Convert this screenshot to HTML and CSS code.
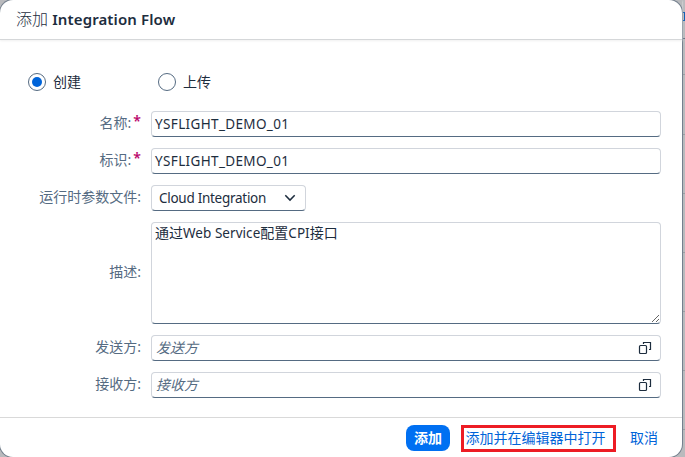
FILE: index.html
```html
<!DOCTYPE html>
<html lang="zh-CN">
<head>
<meta charset="utf-8">
<title>添加 Integration Flow</title>
<link rel="stylesheet" href="styles.css">
</head>
<body>
<div class="backdrop"><i class="mark"></i><i class="rule r1"></i><i class="rule r2"></i><i class="rule r3"></i><i class="rule r4"></i><i class="rule r5"></i><i class="rule r6"></i><i class="rule r7"></i><i class="rule r8"></i></div>
<main class="dialog">
  <header class="header"><h1>添加 <b>Integration Flow</b></h1></header>
  <section class="content">
    <div class="radios">
      <label class="radio"><span class="dot checked"></span>创建</label>
      <label class="radio"><span class="dot"></span>上传</label>
    </div>
    <div class="form">
      <div class="label">名称:<em>*</em></div><div class="field"><span class="code">YSFLIGHT_DEMO_01</span></div>
      <div class="label">标识:<em>*</em></div><div class="field"><span class="code">YSFLIGHT_DEMO_01</span></div>
      <div class="label">运行时参数文件:</div>
      <div class="field select"><span class="choice">Cloud Integration</span><svg width="12" height="8" viewBox="0 0 12 8"><path d="M1.3 1.3 6 6.1 10.7 1.3"/></svg></div>
      <div class="label">描述:</div>
      <div class="field area"><span class="desc">通过<span class="web">Web Service</span>配置<span class="web">CPI</span>接口</span><svg class="grip" width="9" height="9" viewBox="0 0 9 9"><path d="M1 8 8 1M5 8 8 5"/></svg></div>
      <div class="label">发送方:</div>
      <div class="field"><span class="placeholder">发送方</span><svg class="copy" width="14" height="14" viewBox="0 0 14 14"><path d="M5.500 3V1.500H12.500V8.500H11"/><rect x="1.500" y="4.500" width="7" height="8" rx="1"/></svg></div>
      <div class="label">接收方:</div>
      <div class="field"><span class="placeholder">接收方</span><svg class="copy" width="14" height="14" viewBox="0 0 14 14"><path d="M5.500 3V1.500H12.500V8.500H11"/><rect x="1.500" y="4.500" width="7" height="8" rx="1"/></svg></div>
    </div>
  </section>
  <footer class="footer">
    <button class="primary">添加</button>
    <button class="link marked">添加并在编辑器中打开</button>
    <button class="link">取消</button>
  </footer>
</main>
</body>
</html>
```
FILE: styles.css
```css
* { box-sizing: border-box; }
body {
  margin: 0;
  width: 685px;
  height: 457px;
  overflow: hidden;
  position: relative;
  background: #b9babd;
  font: 400 14px/20px "Noto Sans", "Noto Sans CJK SC", sans-serif;
  color: #1d2d3e;
}
.backdrop { position: absolute; inset: 0; }
.mark { position: absolute; right: 0; top: 12px; width: 4px; height: 9px; border: 1px solid #1460b4; }
.rule { position: absolute; right: 0; width: 4px; height: 1px; background: #9b9ea3; }
.r1 { top: 38px; background: #6b7486; }
.r2 { top: 74px; }
.r3 { top: 134px; }
.r4 { top: 193px; }
.r5 { top: 252px; }
.r6 { top: 311px; }
.r7 { top: 370px; }
.r8 { top: 429px; }
.dialog {
  position: relative;
  width: 682px;
  height: 457px;
  display: flex;
  flex-direction: column;
  background: #fff;
  border-radius: 13px;
  box-shadow: 0 0 0 1px #75808e;
}
.header {
  height: 40px;
  padding: 8px 16px 0;
  border-bottom: 1px solid #d5d7d9;
  box-shadow: 0 1px 2px #f0f0f0;
}
h1 { margin: 0; font-size: 16px; line-height: 22px; font-weight: 300; }
h1 b { font-weight: 600; font-size: 15px; letter-spacing: 0.12px; }
.content { flex: 1; padding: 32px 21px 0 27px; }
.radios { display: flex; height: 20px; }
.radio { display: flex; align-items: center; gap: 7px; width: 130px; }
.dot {
  width: 18px;
  height: 18px;
  margin-left: 1px;
  border: 1px solid #556b82;
  border-radius: 50%;
  display: grid;
  place-items: center;
}
.checked::after { content: ""; width: 10px; height: 10px; border-radius: 50%; background: #0064d9; }
.form {
  display: grid;
  grid-template-columns: 114px 510px;
  column-gap: 10px;
  row-gap: 11px;
  margin-top: 19px;
}
.label { color: #556b82; text-align: right; align-self: center; white-space: nowrap; margin-top: -2px; }
.label em { color: #ba066c; font-style: normal; font-weight: 600; font-size: 14px; margin-left: 2px; line-height: 10px; vertical-align: 2px; }
.field {
  display: flex;
  align-items: center;
  justify-content: space-between;
  height: 26px;
  padding: 0 9px 0 3px;
  border: 1px solid #d1d5dc;
  border-bottom-color: #556b82;
  border-radius: 4px;
  white-space: nowrap;
}
.code { font-size: 13.5px; letter-spacing: 0.36px; }
.choice { font-size: 13.5px; letter-spacing: -0.28px; }
.web { font-size: 13.5px; letter-spacing: 0.05px; }
.select { width: 155px; padding-left: 7px; }
.area { position: relative; height: 102px; align-items: flex-start; }
.placeholder { color: #556b82; font-style: italic; padding-left: 1px; }
svg { display: block; fill: none; stroke: #1d2d3e; stroke-width: 1.5; }
.copy { stroke-width: 1.2; margin-right: -1px; }
.grip { position: absolute; right: 0; bottom: 0; stroke: #666; stroke-width: 1; }
.footer {
  height: 40px;
  padding: 7px 16px 0 0;
  border-top: 1px solid #d9d9d9;
  display: flex;
  justify-content: flex-end;
}
button { font: inherit; padding: 0; border: 0; background: none; height: 26px; white-space: nowrap; }
.primary { width: 44px; border-radius: 8px; background: #0070f2; color: #fff; font-weight: 700; margin-right: 11px; }
.link { color: #0064d9; width: 44px; }
.marked { width: 155px; height: 27px; border: 3px solid #ed1c24; margin-right: 6px; padding: 0 6px 2px 0; }
```
